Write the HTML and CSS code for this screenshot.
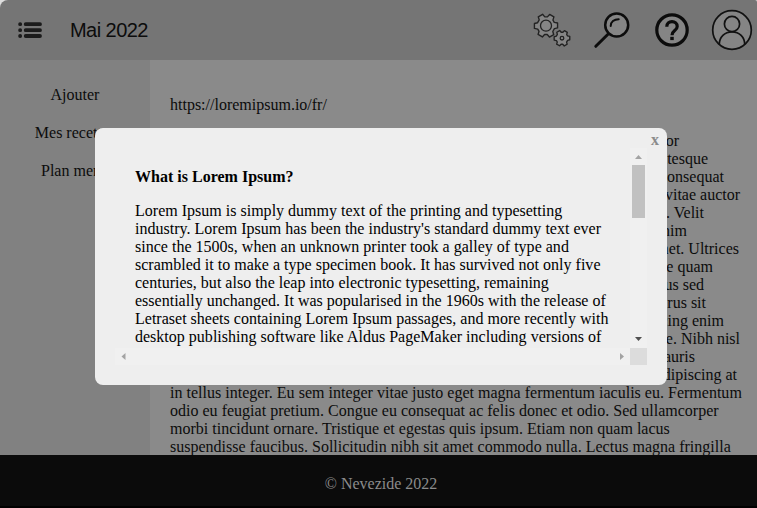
FILE: index.html
```html
<!DOCTYPE html>
<html lang="fr">
<head>
<meta charset="utf-8">
<title>Mai 2022</title>
<link rel="stylesheet" href="styles.css">
</head>
<body>
<div class="page">
  <header class="header">
    <svg class="menu" width="24" height="17" viewBox="0 0 24 17"><g stroke="#1b1b1b" stroke-width="3.8" stroke-linecap="round"><path d="M7.7 2.2H22M7.7 8.2H22M7.7 14H22"/><path d="M2.1 2.2h.1M2.1 8.2h.1M2.1 14h.1"/></g></svg>
    <h1 class="title">Mai 2022</h1>
    <nav class="tools">
      <svg width="40" height="60" viewBox="532 0 40 60" fill="#858585" stroke="#222" stroke-width="1.3" stroke-linejoin="round">
        <path transform="translate(546 25.700) rotate(30) scale(1.070) translate(-545.700 -25.200)" d="M543.4 14.4h4.6l.7 3 2.1 1.2 3-1 2.3 4-2.2 2.1v3l2.2 2.1-2.3 4-3-1-2.1 1.2-.7 3h-4.6l-.7-3-2.1-1.2-3 1-2.3-4 2.2-2.1v-3l-2.200-2.1 2.3-4 3 1 2.1-1.2z"/>
        <circle cx="546" cy="25.700" r="5.500"/>
        <path transform="translate(562 38.200) rotate(30) scale(1.040) translate(-562 -38.150)" d="M560.4 30.7h3.2l.5 2.1 1.4.8 2.1-.7 1.6 2.8-1.5 1.5v2l1.5 1.5-1.6 2.8-2.1-.7-1.4.8-.5 2h-3.2l-.5-2-1.4-.8-2.1.7-1.6-2.8 1.5-1.5v-2l-1.5-1.5 1.6-2.8 2.1.7 1.4-.8z"/>
        <circle cx="562" cy="38.200" r="1.8"/>
      </svg>
      <svg width="40" height="60" viewBox="592 0 40 60" fill="none" stroke="#0c0c0c" stroke-linecap="round">
        <circle cx="616.7" cy="25" r="11.5" fill="#858585" stroke-width="2.5"/>
        <path d="M610.7 26c0-4 3.400-6.800 8-6.800" stroke-width="2"/>
        <path d="M608.2 34L595.800 46.300" stroke-width="3"/>
      </svg>
      <svg width="40" height="60" viewBox="652 0 40 60" fill="none" stroke="#0c0c0c">
        <circle cx="672" cy="30" r="15.200" fill="#858585" stroke-width="3.200"/>
        <path d="M666.800 26.700c0-3.200 2.200-5 5.200-5s5.200 2 5.200 4.700c0 4.300-5.200 4-5.200 8.800" stroke-width="3.200"/>
        <path d="M672 36.800v3.300" stroke-width="3.500"/>
      </svg>
      <svg width="42" height="60" viewBox="711 0 42 60" fill="none" stroke="#111" stroke-width="1.700">
        <circle cx="732" cy="30" r="19.300" fill="#858585"/>
        <circle cx="732" cy="24" r="7.600"/>
        <path d="M719.300 44.500c0-7.300 5.300-12.600 12.700-12.600s12.700 5.300 12.700 12.600"/>
      </svg>
    </nav>
  </header>
  <div class="body">
    <aside class="sidebar"><a>Ajouter</a><a>Mes recettes</a><a>Plan menu</a></aside>
    <main class="main">
      <p class="link">https://loremipsum.io/fr/</p>
      <div class="lines">
        <span>sed do eiusmod tempor</span>
        <span>magna aliqua. Pellentesque</span>
        <span>vel facilisis consequat</span>
        <span>semper quis lectus vitae auctor</span>
        <span>eu augue ut lectus. Velit</span>
        <span>egestas dui id enim</span>
        <span>nunc consequat amet. Ultrices</span>
        <span>sagittis vitae quam</span>
        <span>lectus malesuada purus sed</span>
        <span>venenatis a purus sit</span>
        <span>elit duis adipiscing enim</span>
        <span>volutpat neque. Nibh nisl</span>
        <span>condimentum mauris</span>
        <span>consectetur adipiscing at</span>
      </div>
      <p class="rest">in tellus integer. Eu sem integer vitae justo eget magna fermentum iaculis eu. Fermentum<br>odio eu feugiat pretium. Congue eu consequat ac felis donec et odio. Sed ullamcorper<br>morbi tincidunt ornare. Tristique et egestas quis ipsum. Etiam non quam lacus<br>suspendisse faucibus. Sollicitudin nibh sit amet commodo nulla. Lectus magna fringilla</p>
    </main>
  </div>
  <footer class="footer">© Nevezide 2022</footer>
</div>
<section class="modal">
  <b class="close">x</b>
  <div class="viewport">
    <article class="article">
      <h2>What is Lorem Ipsum?</h2>
      <p>Lorem Ipsum is simply dummy text of the printing and typesetting<br>industry. Lorem Ipsum has been the industry's standard dummy text ever<br>since the 1500s, when an unknown printer took a galley of type and<br>scrambled it to make a type specimen book. It has survived not only five<br>centuries, but also the leap into electronic typesetting, remaining<br>essentially unchanged. It was popularised in the 1960s with the release of<br>Letraset sheets containing Lorem Ipsum passages, and more recently with<br>desktop publishing software like Aldus PageMaker including versions of</p>
    </article>
    <div class="vbar">
      <svg width="17" height="17"><path d="M5 11h7l-3.500-4z" fill="#a3a3a3"/></svg>
      <div class="thumb"></div>
      <svg width="17" height="17"><path d="M5 6h7l-3.500 4z" fill="#505050"/></svg>
    </div>
    <div class="hbar">
      <svg width="17" height="17"><path d="M10.500 5v7l-4-3.500z" fill="#a3a3a3"/></svg>
      <svg width="17" height="17"><path d="M7 5v7l4-3.500z" fill="#a3a3a3"/></svg>
    </div>
    <div class="corner"></div>
  </div>
</section>
</body>
</html>
```
FILE: styles.css
```css
* { box-sizing: border-box; }
body { margin: 0; background: #ddd; color: #000; font: 16px/18px "Liberation Serif", serif; }
p, h1, h2 { margin: 0; }
svg { display: block; flex: none; }
.page { height: 508px; display: flex; flex-direction: column; overflow: hidden; }
.header { flex: none; height: 60px; display: flex; align-items: center; background: #757575; border-radius: 8px 2px 0 0; padding: 0 4px 0 18px; }
.title { margin-left: 28px; font: 20px/24px "Liberation Sans", sans-serif; letter-spacing: -.55px; color: #0c0c0c; }
.tools { margin-left: auto; display: flex; gap: 20px; }
.tools svg:last-child { margin-left: -1px; }
.body { height: 395px; flex: none; display: flex; overflow: hidden; color: #0c0c0c; }
.sidebar { width: 150px; flex: none; background: #818181; padding-top: 26px; display: flex; flex-direction: column; gap: 20px; text-align: center; }
.main { flex: 1; background: #8a8a8a; padding: 36px 0 0 20px; white-space: nowrap; }
.lines { margin-top: 18px; }
.lines span { display: block; text-align: right; height: 18px; }
.lines span:nth-child(1) { width: 509px; }
.lines span:nth-child(2) { width: 538px; }
.lines span:nth-child(3) { width: 554px; }
.lines span:nth-child(4) { width: 570px; }
.lines span:nth-child(5) { width: 534px; }
.lines span:nth-child(6) { width: 517px; }
.lines span:nth-child(7) { width: 569px; }
.lines span:nth-child(8) { width: 543px; }
.lines span:nth-child(9) { width: 534px; }
.lines span:nth-child(10) { width: 536px; }
.lines span:nth-child(11) { width: 554px; }
.lines span:nth-child(12) { width: 570px; }
.lines span:nth-child(13) { width: 525px; }
.lines span:nth-child(14) { width: 567px; }
.rest { letter-spacing: .01px; }
.footer { height: 53px; background: #0b0b0b; border-bottom: 2px solid #000; color: #8c8c8c; text-align: center; padding: 20px 0 0 5px; }
.modal { position: absolute; left: 95px; top: 128px; width: 572px; height: 257px; padding: 20px; border-radius: 8px; background: #eee; }
.close { position: absolute; right: 8px; top: 3px; color: #8b8b8b; }
.viewport { height: 217px; display: grid; grid-template: 200px 17px / 515px 17px; }
.article { padding: 20px 0 0 20px; overflow: hidden; white-space: nowrap; letter-spacing: .01px; }
.article h2 { font-size: 16px; line-height: 18px; margin-bottom: 16px; }
.vbar { background: #f0f0f0; }
.thumb { width: 13px; height: 53px; margin: 0 2px 113px; background: #c1c1c1; }
.hbar { background: #f0f0f0; display: flex; justify-content: space-between; }
.corner { background: #dcdcdc; }
```
